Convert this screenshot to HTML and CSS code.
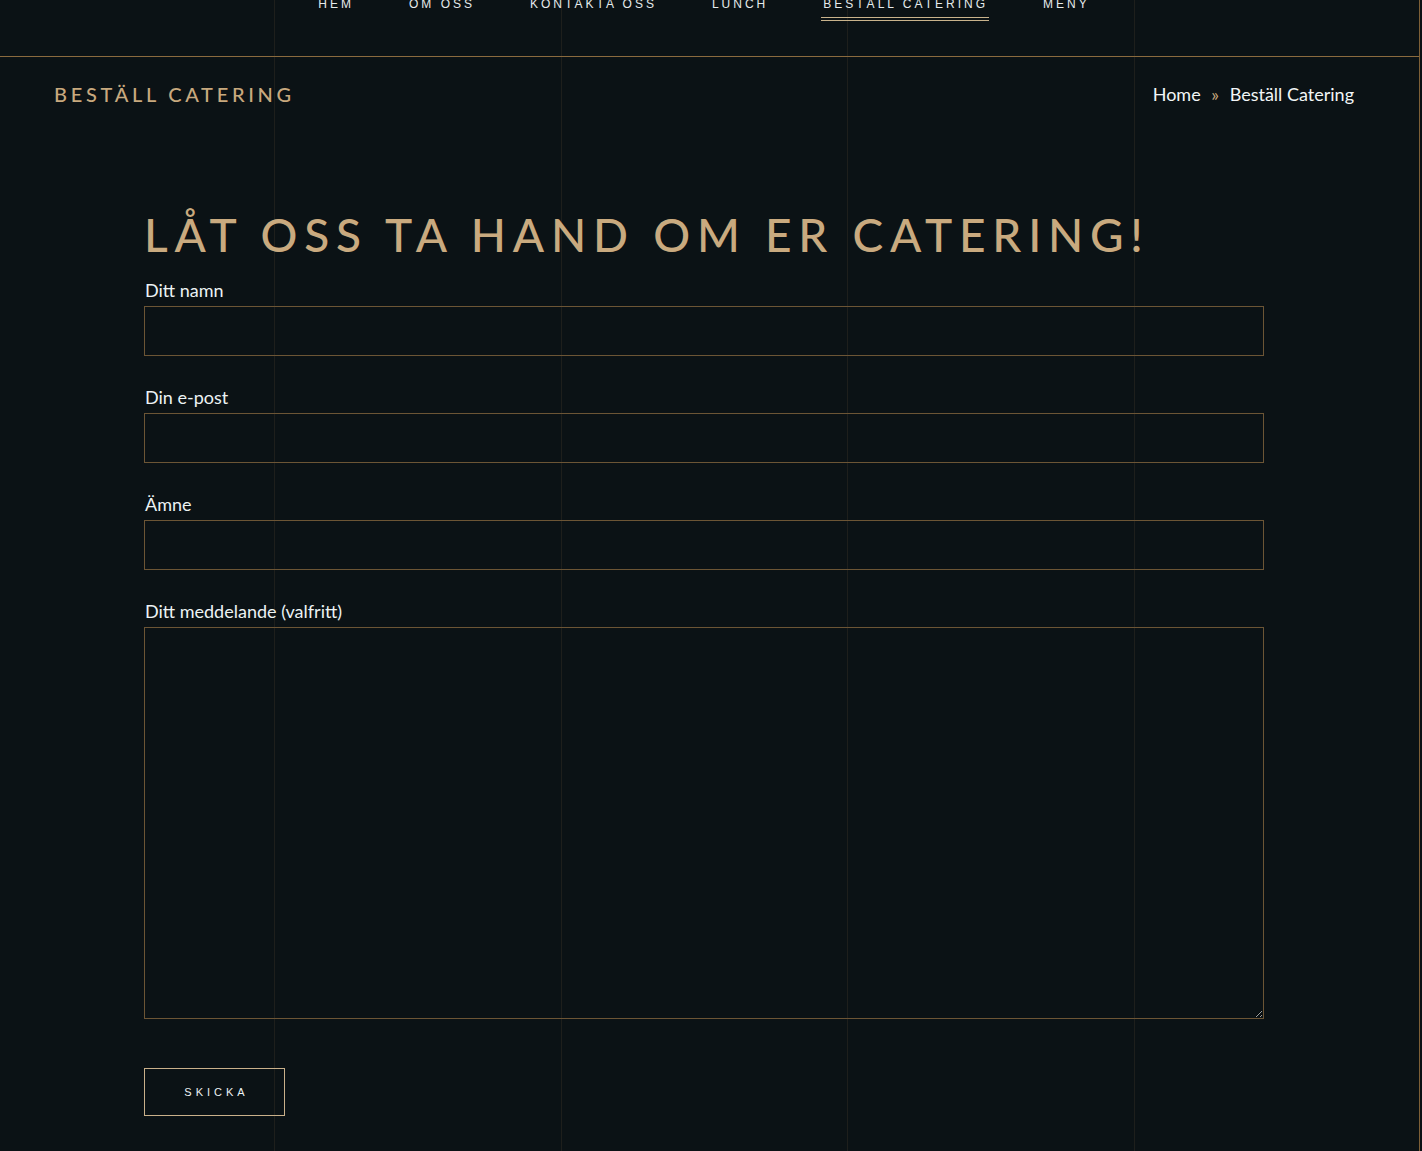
FILE: index.html
```html
<!DOCTYPE html>
<html>
<head>
<title>Beställ Catering</title>
<meta charset="utf-8">
<meta name="viewport" content="width=device-width, initial-scale=1">
<link rel="stylesheet" href="styles.css">
</head>
<body>
<div class="page">
	<nav class="topnav">
		<ul>
			<li><a href="#">Hem</a></li>
			<li><a href="#">Om oss</a></li>
			<li><a href="#">Kontakta oss</a></li>
			<li><a href="#">Lunch</a></li>
			<li class="active"><a href="#">Beställ Catering</a></li>
			<li><a href="#">Meny</a></li>
		</ul>
	</nav>
	<div class="pagehead">
		<h2>Beställ Catering</h2>
		<div class="crumbs">
			<a href="#">Home</a>
			<span class="sep">&raquo;</span>
			<span class="current">Beställ Catering</span>
		</div>
	</div>
	<div class="content">
		<h1>Låt oss ta hand om er catering!</h1>
		<form class="order">
			<label for="namn">Ditt namn</label>
			<input type="text" id="namn">
			<label for="epost">Din e-post</label>
			<input type="email" id="epost">
			<label for="amne">Ämne</label>
			<input type="text" id="amne">
			<label for="msg">Ditt meddelande (valfritt)</label>
			<textarea id="msg"></textarea>
			<button type="button">Skicka</button>
		</form>
	</div>
</div>
</body>
</html>
```

FILE: styles.css
```css
html {
	background-color: #0b1215;
}
body {
	margin: 0;
	width: 1419px;
	min-height: 1151px;
	border-right: 1px solid #7d5f36;
	font-family: Lato, "Noto Sans", sans-serif;
	color: #edf3f4;
	background-color: #0b1215;
	background-image:
		linear-gradient(#1e1f1c, #1e1f1c),
		linear-gradient(#1e1f1c, #1e1f1c),
		linear-gradient(#1e1f1c, #1e1f1c),
		linear-gradient(#1e1f1c, #1e1f1c);
	background-size: 1px 100%;
	background-repeat: no-repeat;
	background-position: 274px 0, 561px 0, 847px 0, 1134px 0;
	overflow: hidden;
}
a {
	color: inherit;
	text-decoration: none;
}
.page {
	width: 1408px;
}
.topnav {
	display: flow-root;
	height: 56px;
	width: 1419px;
	border-bottom: 1px solid #8a6a3e;
}
.topnav ul {
	margin: -5px 0 0 0;
	padding: 0;
	width: 1408px;
	display: flex;
	justify-content: center;
	gap: 55px;
	list-style: none;
}
.topnav li {
	position: relative;
	line-height: 14px;
}
.topnav a {
	font-family: "Liberation Sans", Arial, sans-serif;
	font-size: 12px;
	letter-spacing: 3px;
	text-transform: uppercase;
	color: #e6ebec;
}
.topnav li.active::after {
	content: "";
	position: absolute;
	left: -2px;
	right: -1px;
	top: 22px;
	height: 2px;
	border-top: 1px solid #c9b38c;
	border-bottom: 1px solid #c9b38c;
}
.pagehead {
	display: flex;
	justify-content: space-between;
	align-items: center;
	padding: 10px 54px 0 54px;
	height: 54px;
}
.pagehead h2 {
	margin: 0;
	font-size: 20px;
	font-weight: 500;
	letter-spacing: 3.7px;
	text-transform: uppercase;
	color: #c8a97e;
}
.crumbs {
	font-size: 18px;
	color: #f2f6f7;
}
.crumbs .sep {
	color: #c8a97e;
	margin: 0 6px;
}
.content {
	width: 1120px;
	margin: 0 auto;
	padding-top: 86px;
}
h1 {
	margin: 0 0 15px 0;
	font-size: 46px;
	font-weight: 500;
	letter-spacing: 6.8px;
	line-height: 56px;
	white-space: nowrap;
	text-transform: uppercase;
	color: #c9aa7f;
}
.order {
	display: flex;
	flex-direction: column;
}
.order label {
	font-size: 18px;
	line-height: 24px;
	margin-bottom: 4px;
	padding-left: 1px;
}
.order input, .order textarea {
	box-sizing: border-box;
	width: 100%;
	height: 50px;
	margin: 0 0 29px 0;
	background: transparent;
	border: 1px solid #6c5535;
	color: #edf3f4;
	font: inherit;
}
.order textarea {
	height: 392px;
	margin-bottom: 49px;
	resize: vertical;
}
.order button {
	align-self: flex-start;
	width: 141px;
	height: 48px;
	background: transparent;
	border: 1px solid #c9b08a;
	color: #edf3f4;
	font-family: "Liberation Sans", Arial, sans-serif;
	font-size: 11px;
	letter-spacing: 4px;
	text-transform: uppercase;
	padding: 0 0 0 4px;
}
```
